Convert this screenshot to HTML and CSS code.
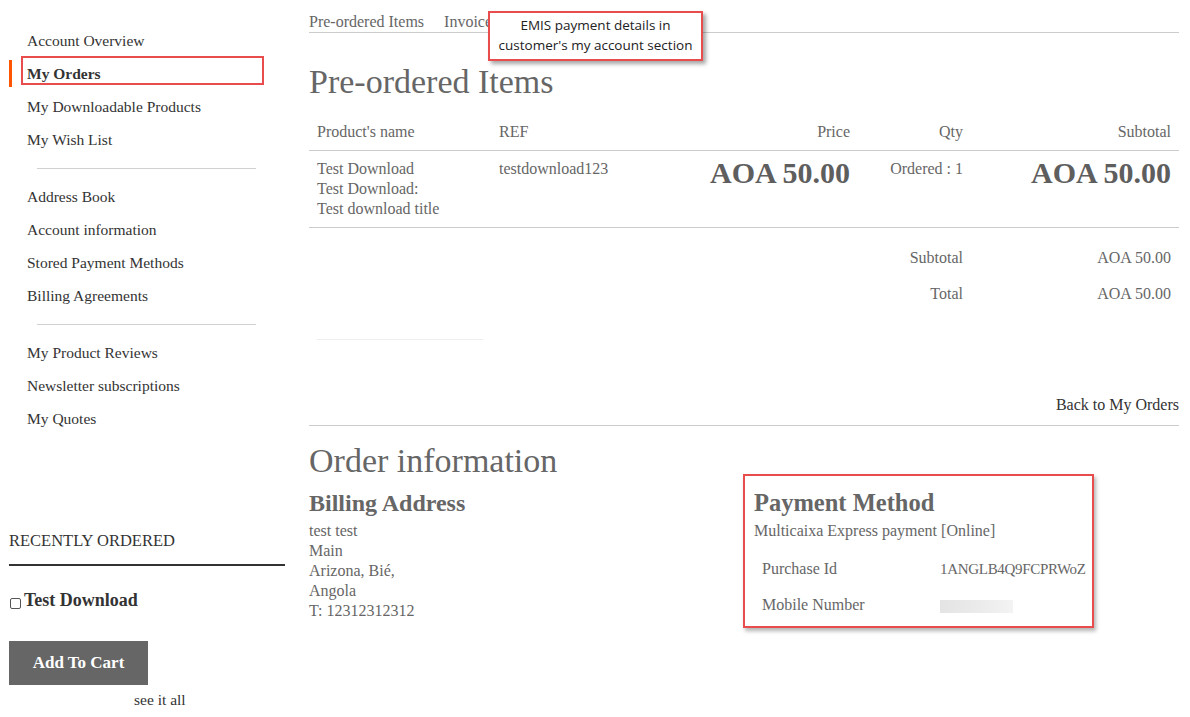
FILE: index.html
```html
<!DOCTYPE html>
<html lang="en">
<head>
<meta charset="utf-8">
<title>Order</title>
<link rel="stylesheet" href="styles.css">
</head>
<body>
<div class="page">
  <aside class="sidebar">
    <nav class="account-nav">
      <ul class="nav-group">
        <li class="nav-item">Account Overview</li>
        <li class="nav-item active"><span class="mark-box">My Orders</span></li>
        <li class="nav-item">My Downloadable Products</li>
        <li class="nav-item">My Wish List</li>
      </ul>
      <div class="nav-divider"></div>
      <ul class="nav-group">
        <li class="nav-item">Address Book</li>
        <li class="nav-item">Account information</li>
        <li class="nav-item">Stored Payment Methods</li>
        <li class="nav-item">Billing Agreements</li>
      </ul>
      <div class="nav-divider"></div>
      <ul class="nav-group">
        <li class="nav-item">My Product Reviews</li>
        <li class="nav-item">Newsletter subscriptions</li>
        <li class="nav-item">My Quotes</li>
      </ul>
    </nav>
    <div class="recent">
      <div class="recent-title">RECENTLY ORDERED</div>
      <label class="recent-item"><span class="checkbox"></span>Test Download</label>
      <button class="add-cart">Add To Cart</button>
      <div class="see-all">see it all</div>
    </div>
  </aside>

  <main class="main">
    <div class="tabs">
      <span class="tab">Pre-ordered Items</span>
      <span class="tab">Invoices</span>
      <div class="callout">EMIS payment details in<br>customer's my account section</div>
    </div>

    <h1 class="page-title">Pre-ordered Items</h1>

    <table class="items">
      <thead>
        <tr>
          <th class="c-name">Product's name</th>
          <th class="c-ref">REF</th>
          <th class="c-price">Price</th>
          <th class="c-qty">Qty</th>
          <th class="c-sub">Subtotal</th>
        </tr>
      </thead>
      <tbody>
        <tr>
          <td class="c-name">Test Download<br>Test Download:<br>Test download title</td>
          <td class="c-ref">testdownload123</td>
          <td class="c-price"><span class="big-price">AOA 50.00</span></td>
          <td class="c-qty">Ordered : 1</td>
          <td class="c-sub"><span class="big-price">AOA 50.00</span></td>
        </tr>
      </tbody>
    </table>

    <table class="totals">
      <tr><td class="t-label">Subtotal</td><td class="t-value">AOA 50.00</td></tr>
      <tr><td class="t-label">Total</td><td class="t-value">AOA 50.00</td></tr>
    </table>

    <div class="faint-line"></div>

    <div class="back-row"><span class="back-link">Back to My Orders</span></div>

    <h2 class="section-title">Order information</h2>

    <div class="info-cols">
      <div class="info-col">
        <h3 class="box-title">Billing Address</h3>
        <address class="address">test test<br>Main<br>Arizona, Bié,<br>Angola<br>T: 12312312312</address>
      </div>
      <div class="info-col payment">
        <h3 class="box-title">Payment Method</h3>
        <div class="pay-name">Multicaixa Express payment [Online]</div>
        <table class="pay-table">
          <tr><td class="p-label">Purchase Id</td><td class="p-value">1ANGLB4Q9FCPRWoZ</td></tr>
          <tr><td class="p-label">Mobile Number</td><td class="p-value"><span class="blur"></span></td></tr>
        </table>
      </div>
    </div>
  </main>
</div>
</body>
</html>
```

FILE: styles.css
```css
*, *::before, *::after { box-sizing: border-box; }
html, body { margin: 0; padding: 0; background: #fff; }
body {
  font-family: "Liberation Serif", "DejaVu Serif", serif;
  font-size: 16px;
  color: #666;
}
.page {
  display: flex;
  width: 1190px;
  height: 717px;
  overflow: hidden;
}

/* Sidebar */
.sidebar {
  width: 309px;
  padding-left: 9px;
  flex: none;
}
.account-nav { margin-top: 24px; width: 276px; }
.nav-group { list-style: none; margin: 0; padding: 0; }
.nav-item {
  position: relative;
  height: 33px;
  line-height: 34px;
  padding-left: 18px;
  color: #333;
  font-size: 15.5px;
}
.nav-item.active { font-weight: bold; }
.nav-item.active::before {
  content: "";
  position: absolute;
  left: 0;
  top: 3px;
  width: 3px;
  height: 27px;
  background: #ff5501;
}
.mark-box { position: relative; }
.mark-box::after {
  content: "";
  position: absolute;
  left: -6px;
  top: -9px;
  width: 243px;
  height: 29px;
  border: 2px solid #e84c4c;
}
.nav-divider {
  margin: 12px 29px 11px 28px;
  border-top: 1px solid #d1d1d1;
}
.recent { margin-top: 93px; width: 276px; }
.recent-title {
  font-size: 16.5px;
  color: #333;
  line-height: 26px;
  padding-bottom: 10px;
  border-bottom: 2px solid #333;
}
.recent-item {
  display: flex;
  align-items: center;
  margin-top: 22px;
  font-size: 18px;
  font-weight: bold;
  color: #333;
  line-height: 24px;
}
.checkbox {
  width: 11px;
  height: 11px;
  border: 1px solid #555;
  border-radius: 2px;
  margin: 6px 3px 0 1px;
  background: #fff;
}
.add-cart {
  display: block;
  margin-top: 29px;
  width: 139px;
  height: 44px;
  border: none;
  background: #666;
  color: #fff;
  font-family: inherit;
  font-size: 17px;
  font-weight: bold;
  padding: 0;
}
.see-all {
  margin-top: 7px;
  padding-left: 125px;
  color: #333;
  font-size: 15.5px;
  line-height: 16px;
}

/* Main */
.main { width: 870px; flex: none; }
.tabs {
  position: relative;
  display: flex;
  gap: 20px;
  padding-top: 12px;
  height: 33px;
  line-height: 20px;
  border-bottom: 1px solid #ccc;
}
.tab { color: #666; }
.callout {
  position: absolute;
  left: 179px;
  top: 11px;
  width: 215px;
  height: 50px;
  border: 2px solid #e84c4c;
  background: #fff;
  box-shadow: 3px 3px 4px rgba(0,0,0,0.35);
  font-family: "Open Sans", "Liberation Sans", sans-serif;
  font-size: 13.5px;
  line-height: 20px;
  color: #222;
  text-align: center;
  padding-top: 2px;
  z-index: 2;
}
.page-title {
  margin: 29px 0 0;
  font-size: 34px;
  font-weight: normal;
  line-height: 40px;
  color: #666;
}
.items {
  width: 870px;
  margin-top: 11px;
  border-collapse: collapse;
  table-layout: fixed;
}
.items th {
  font-weight: normal;
  padding: 9px 8px 7px;
  line-height: 20px;
  height: 37px;
  border-bottom: 1px solid #ccc;
  text-align: left;
}
.items td {
  vertical-align: top;
  padding: 8px 8px 8px;
  line-height: 20px;
  border-bottom: 1px solid #ccc;
  height: 76px;
}
.c-name { width: 182px; }
.c-ref { width: 199px; }
.c-price { width: 168px; text-align: right !important; }
.c-qty { width: 113px; text-align: right !important; }
.c-sub { width: 208px; text-align: right !important; }
.big-price {
  display: inline-block;
  font-size: 30px;
  font-weight: bold;
  line-height: 30px;
  margin-top: -1px;
  color: #5e5e5e;
}
.totals {
  width: 870px;
  margin-top: 11px;
  border-collapse: collapse;
  table-layout: fixed;
}
.totals td {
  padding: 9px 8px 7px;
  line-height: 20px;
}
.t-label { width: 662px; text-align: right; }
.t-value { text-align: right; }
.faint-line {
  margin: 28px 0 0 8px;
  width: 166px;
  border-top: 1px solid #eee;
}
.back-row {
  margin-top: 55px;
  text-align: right;
  line-height: 20px;
  padding-bottom: 10px;
  border-bottom: 1px solid #ccc;
}
.back-link { color: #333; }
.section-title {
  margin: 15px 0 0;
  font-size: 34px;
  font-weight: normal;
  line-height: 40px;
  color: #666;
}
.info-cols { display: flex; }
.info-col { width: 445px; }
.payment { position: relative; width: 340px; }
.payment::after {
  content: "";
  position: absolute;
  left: -11px;
  top: -7px;
  width: 351px;
  height: 154px;
  border: 2px solid #e84c4c;
  box-shadow: 2px 3px 4px rgba(0,0,0,0.3);
  pointer-events: none;
}
.box-title {
  margin: 0;
  font-size: 24px;
  font-weight: bold;
  line-height: 28px;
  color: #666;
  padding-top: 8px;
}
.payment .box-title { font-size: 24.5px; }
.address {
  font-style: normal;
  line-height: 20px;
  margin-top: 4px;
}
.pay-name { line-height: 20px; margin-top: 4px; }
.pay-table {
  border-collapse: collapse;
  margin-top: 10px;
  width: 340px;
  table-layout: fixed;
}
.pay-table td { padding: 8px; line-height: 20px; }
.p-label { width: 178px; }
.p-value { white-space: nowrap; font-size: 15px; letter-spacing: -0.3px; }
.blur {
  display: inline-block;
  width: 73px;
  height: 13px;
  vertical-align: middle;
  background: linear-gradient(90deg, #e4e4e4, #ececec 60%, #f3f3f3);
}
```
